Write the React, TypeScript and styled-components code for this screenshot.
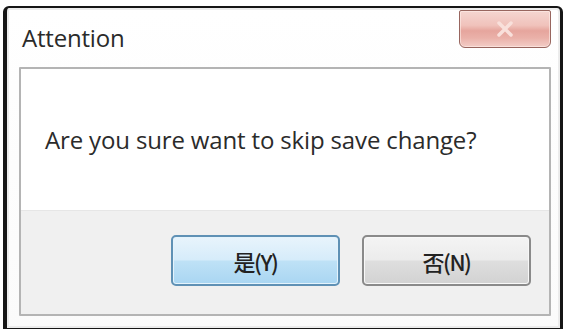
import React from "react";
import styled, { createGlobalStyle } from "styled-components";

const Global = createGlobalStyle`
  html, body { margin: 0; padding: 0; background: #ffffff; }
  body { width: 567px; height: 329px; overflow: hidden; font-family: "Open Sans", "Noto Sans", sans-serif; }
`;

const Page = styled.div`
  width: 567px;
  height: 329px;
  padding: 6px 4px 0 3px;
  box-sizing: border-box;
`;

const Window = styled.div`
  width: 560px;
  height: 326px;
  box-sizing: border-box;
  border: 3px solid #161616;
  border-top-width: 2px;
  border-left-width: 4px;
  border-bottom-width: 4px;
  border-radius: 6px 6px 2px 2px;
  background: linear-gradient(#ffffff, #fbfbfb);
  display: flex;
  flex-direction: column;
  padding: 0 9px 12px 12px;
  box-shadow: inset 0 0 0 2px #ececec;
`;

const TitleBar = styled.div`
  height: 59px;
  display: flex;
  align-items: flex-start;
  justify-content: space-between;
`;

const Title = styled.div`
  margin-top: 16px;
  margin-left: 3px;
  font-family: "Open Sans", "Noto Sans", sans-serif;
  font-size: 24px;
  line-height: 1.2;
  color: #2a2a2a;
  letter-spacing: -0.2px;
`;

const CloseButton = styled.div`
  width: 92px;
  height: 38px;
  margin-top: 2px;
  box-sizing: border-box;
  border: 1px solid #98665f;
  border-radius: 2px 2px 6px 6px;
  background: linear-gradient(#f5d6d1 0%, #f0c2bb 40%, #e6a59d 55%, #eab1a9 75%, #f3cdc7 100%);
  box-shadow: inset 0 0 0 1px rgba(255, 238, 234, 0.6);
  display: flex;
  align-items: center;
  justify-content: center;
`;

const Panel = styled.div`
  flex: 1;
  box-sizing: border-box;
  border: 2px solid #b4b4b4;
  border-radius: 1px;
  display: flex;
  flex-direction: column;
  box-shadow: inset 1px 1px 0 #e6e6e6;
`;

const MessageArea = styled.div`
  height: 141px;
  background: #ffffff;
  display: flex;
  align-items: flex-start;
  padding: 57px 0 0 24px;
  box-sizing: border-box;
`;

const Message = styled.div`
  font-family: "Open Sans", "Noto Sans", sans-serif;
  font-size: 24px;
  line-height: 1.2;
  color: #2b2b2b;
  letter-spacing: -0.15px;
`;

const ButtonArea = styled.div`
  flex: 1;
  background: #f0f0f0;
  border-top: 1px solid #e6e6e6;
  display: flex;
  justify-content: flex-end;
  align-items: flex-start;
  gap: 22px;
  padding: 24px 18px 0 0;
`;

const DialogButton = styled.div<{ $primary?: boolean }>`
  width: 169px;
  height: 51px;
  box-sizing: border-box;
  border-radius: 5px;
  border: 2px solid ${(p) => (p.$primary ? "#5f91b5" : "#8a8a8a")};
  background: ${(p) =>
    p.$primary
      ? "linear-gradient(#e8f4fc 0%, #d6ecfa 48%, #bee1f6 52%, #a9d6f2 100%)"
      : "linear-gradient(#f4f4f4 0%, #ececec 48%, #dedede 52%, #d2d2d2 100%)"};
  box-shadow: inset 0 0 0 1px ${(p) => (p.$primary ? "#e4f3fc" : "#f8f8f8")};
  display: flex;
  align-items: center;
  justify-content: center;
  font-family: "Noto Sans CJK KR", "Noto Sans CJK SC", sans-serif;
  font-size: 22px;
  font-weight: 500;
  color: #222;
  letter-spacing: -1.5px;
`;

export default function App() {
  return (
    <>
      <Global />
      <Page>
        <Window>
          <TitleBar>
            <Title>Attention</Title>
            <CloseButton>
              <svg width="20" height="16" viewBox="0 0 20 16">
                <path d="M4 2 L16 14 M16 2 L4 14" stroke="#f9e0db" strokeWidth="3.5" strokeLinecap="round" />
              </svg>
            </CloseButton>
          </TitleBar>
          <Panel>
            <MessageArea>
              <Message>Are you sure want to skip save change?</Message>
            </MessageArea>
            <ButtonArea>
              <DialogButton $primary>是(Y)</DialogButton>
              <DialogButton>否(N)</DialogButton>
            </ButtonArea>
          </Panel>
        </Window>
      </Page>
    </>
  );
}
